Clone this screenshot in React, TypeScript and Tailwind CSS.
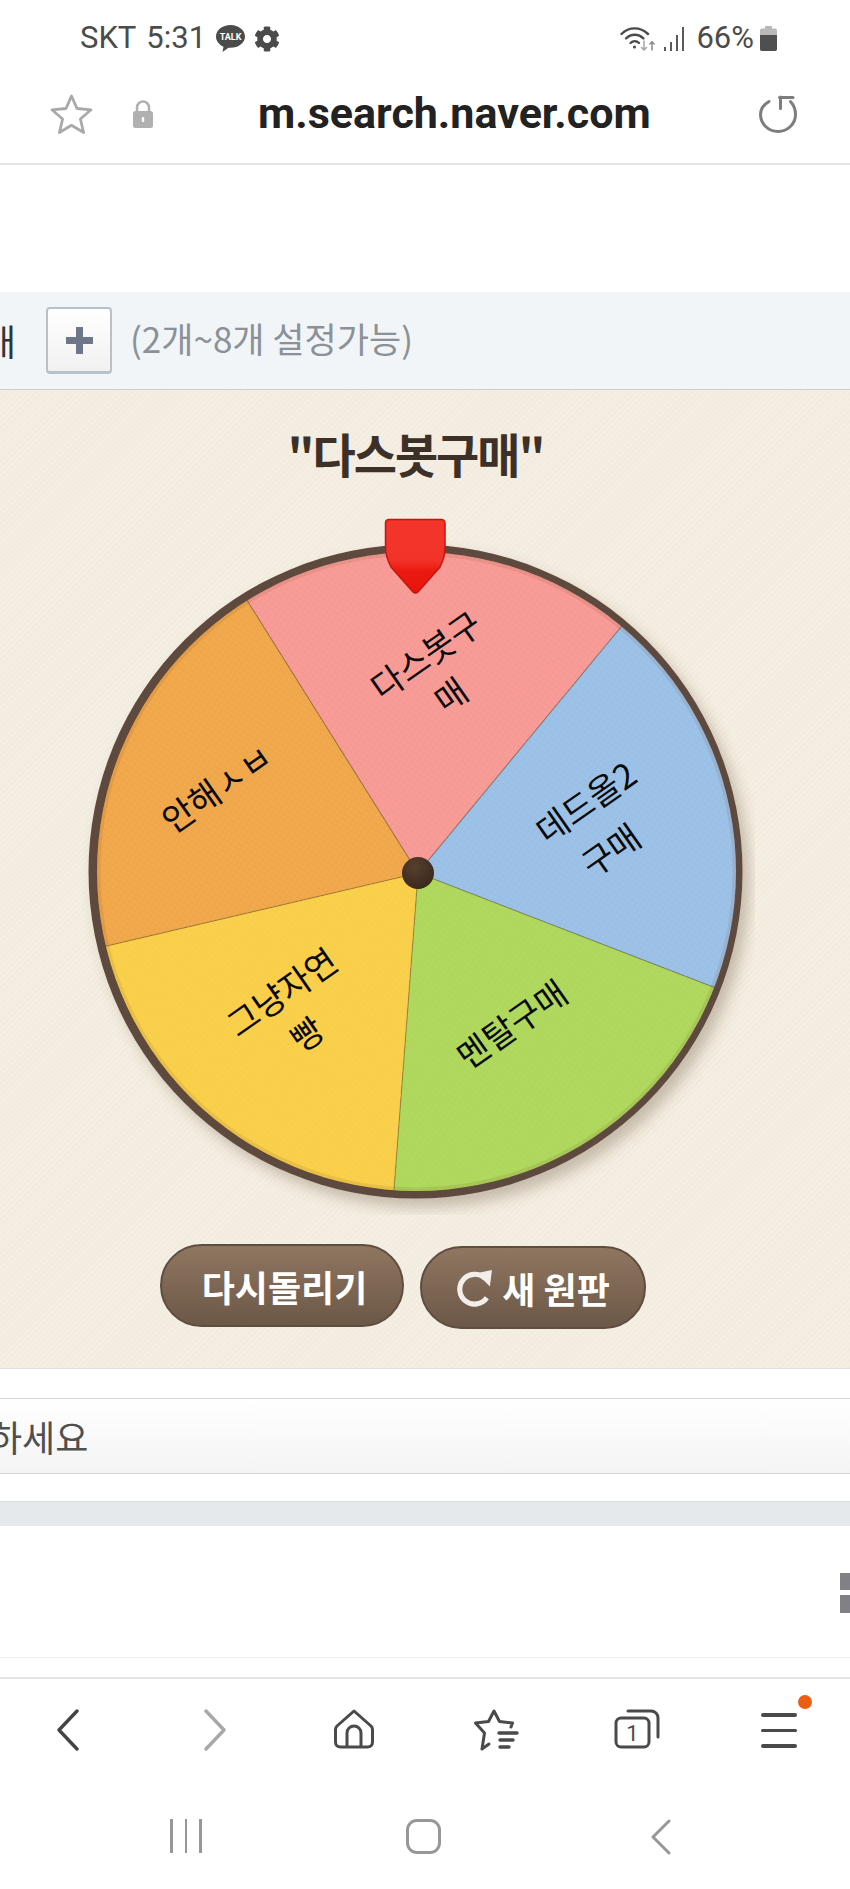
import React from 'react';
import { FaCog } from 'react-icons/fa';

const KR = "font-['Noto_Sans_CJK_KR','Noto_Sans',sans-serif]";

const KakaoIcon = () => (
  <svg width="29" height="27" viewBox="0 0 29 27">
    <path d="M14.5 0C6.5 0 0 5 0 11.5c0 4.5 3.2 8.300 7.500 10.200L6.500 27l6-4.300c.7.100 1.300.100 2 .100 8 0 14.500-5 14.500-11.300S22.500 0 14.500 0z" fill="#4b4b4b" />
    <text x="14.500" y="15" textAnchor="middle" fontSize="9" fontWeight="700" fill="#fff" fontFamily="Roboto, sans-serif">TALK</text>
  </svg>
);

const WifiIcon = () => (
  <svg width="36" height="26" viewBox="0 0 36 26" fill="none" stroke="#4b4b4b" strokeLinecap="round">
    <path d="M1.500 8C9 0.500 20 0.500 28 8" strokeWidth="2.400" />
    <path d="M6 12.500c5-5 12.500-5 17.500 0" strokeWidth="2.400" />
    <path d="M10.500 17c2.500-2.500 6-2.500 8.500 0" strokeWidth="2.400" />
    <circle cx="14.500" cy="21" r="1.600" fill="#4b4b4b" stroke="none" />
    <path d="M24 15v9M21.500 21.500l2.500 2.500 2.500-2.500" stroke="#a5a5a5" strokeWidth="1.500" />
    <path d="M32 24v-8M29.800 18l2.200-2.200 2.200 2.200" stroke="#8a8a8a" strokeWidth="1.500" />
  </svg>
);

const SignalIcon = () => (
  <svg width="21" height="24" viewBox="0 0 21 24" fill="#5a5a5a">
    <rect x="0" y="20" width="2" height="4" />
    <rect x="6" y="15" width="2" height="9" />
    <rect x="12" y="8" width="2" height="16" />
    <rect x="18" y="0" width="2" height="24" />
  </svg>
);

const BatteryIcon = () => (
  <svg width="17" height="25" viewBox="0 0 17 25">
    <path d="M5 0h7v2.500h3a2 2 0 0 1 2 2V23a2 2 0 0 1-2 2H2a2 2 0 0 1-2-2V4.500a2 2 0 0 1 2-2h3z" fill="#b9b9b9" />
    <path d="M0 9h17v14a2 2 0 0 1-2 2H2a2 2 0 0 1-2-2z" fill="#4f4f4f" />
  </svg>
);

const StarOutline = () => (
  <svg width="43" height="40" viewBox="0 0 43 40" fill="none" stroke="#a9a9a9" strokeWidth="2.800" strokeLinejoin="round">
    <path d="M21.500 2l5.500 12.500 14 1.300-10.600 9.200 3.200 13.500-12.100-7.200L9.400 38.500l3.200-13.500L2 15.800l14-1.300z" />
  </svg>
);

const LockIcon = () => (
  <svg width="20" height="28" viewBox="0 0 20 28">
    <path d="M4 12V7.500a6 6 0 0 1 12 0V12" fill="none" stroke="#b0b0b0" strokeWidth="2.500" />
    <rect x="0" y="11" width="20" height="17" rx="2.500" fill="#b0b0b0" />
    <rect x="8.800" y="17" width="2.400" height="5" rx="1" fill="#fff" />
  </svg>
);

const ReloadIcon = () => (
  <svg width="39" height="38" viewBox="0 0 39 38" fill="none" stroke="#7d7d7d" strokeWidth="3" strokeLinecap="round">
    <path d="M10 6.500C4.500 9.800 1.500 14.500 1.500 19.500a17.500 17 0 1 0 35 0c0-5-1.800-9.500-5-13" />
    <path d="M22.500 2.500h13.500M23.500 2v11.500" transform="translate(-2 0)" />
  </svg>
);

const PlusGlyph = () => (
  <svg width="27" height="27" viewBox="0 0 27 27" fill="#6f7689">
    <rect x="10" y="0" width="7" height="27" />
    <rect x="0" y="10" width="27" height="7" />
  </svg>
);

// slice edges run a bit past the rim, the clip circle trims them
const slices = [
  { d: 'M418 873 L239.500 588.500 A335 335 0 0 1 632.200 613.600 Z', fill: '#f79a95' },
  { d: 'M418 873 L632.200 613.600 A335 335 0 0 1 727.800 992.700 Z', fill: '#9bc0e6' },
  { d: 'M418 873 L727.800 992.700 A335 335 0 0 1 392.800 1203.800 Z', fill: '#aed75c' },
  { d: 'M418 873 L392.800 1203.800 A335 335 0 0 1 90.400 949.700 Z', fill: '#f9cf49' },
  { d: 'M418 873 L90.400 949.700 A335 335 0 0 1 239.500 588.500 Z', fill: '#f0a74a' },
];

const labels = [
  { t: '다스봇구', x: 425, y: 654 },
  { t: '매', x: 450, y: 694 },
  { t: '데드올2', x: 585, y: 801 },
  { t: '구매', x: 610, y: 849 },
  { t: '멘탈구매', x: 511, y: 1023 },
  { t: '그냥자연', x: 281, y: 991 },
  { t: '빵', x: 306, y: 1033 },
  { t: '안해ㅅㅂ', x: 216, y: 787 },
];

const Wheel = () => (
  <svg width="675" height="705" viewBox="80 510 675 705" className="ml-[80px] block">
    <defs>
      <pattern id="grain" width="5" height="5" patternUnits="userSpaceOnUse" patternTransform="rotate(35)">
        <circle cx="1.500" cy="1.500" r="1" fill="#ffffff" opacity="0.08" />
      </pattern>
      <clipPath id="face">
        <circle cx="416.500" cy="871.500" r="319.500" />
      </clipPath>
      <filter id="wheelShadow" x="-10%" y="-10%" width="120%" height="120%">
        <feDropShadow dx="7" dy="9" stdDeviation="7" floodColor="#5a4632" floodOpacity="0.3" />
      </filter>
      <linearGradient id="pin" x1="0" y1="0" x2="0" y2="1">
        <stop offset="0" stopColor="#f4352b" />
        <stop offset="0.55" stopColor="#f2332a" />
        <stop offset="0.7" stopColor="#ea1a10" />
        <stop offset="1" stopColor="#e8140c" />
      </linearGradient>
      <radialGradient id="hub" cx="0.4" cy="0.3" r="0.8">
        <stop offset="0" stopColor="#56402f" />
        <stop offset="1" stopColor="#38261a" />
      </radialGradient>
    </defs>
    <circle cx="415.500" cy="871.500" r="327" fill="#5d4a3c" filter="url(#wheelShadow)" />
    <g clipPath="url(#face)">
      {slices.map((s) => (
        <path key={s.fill} d={s.d} fill={s.fill} stroke="#4a3a20" strokeOpacity="0.25" strokeWidth="1.200" />
      ))}
      {slices.map((s) => (
        <path key={s.fill + 'g'} d={s.d} fill="url(#grain)" />
      ))}
      <circle cx="416.500" cy="871.500" r="318" fill="none" stroke="#7a4a20" strokeOpacity="0.12" strokeWidth="4" />
    </g>
    {labels.map((l) => (
      <text
        key={l.t}
        x={l.x}
        y={l.y}
        textAnchor="middle"
        dominantBaseline="central"
        fontSize="34"
        fill="#0a0a0a"
        fontFamily="'Noto Sans CJK KR', sans-serif"
        transform={`rotate(-35 ${l.x} ${l.y})`}
      >
        {l.t}
      </text>
    ))}
    <circle cx="418" cy="873" r="16" fill="url(#hub)" />
    <path
      d="M388.500 519.500h53a3.500 3.500 0 0 1 3.500 3.500V548c0 8-2 13-5 19L418 592a3.500 3.500 0 0 1-5 0L391 567c-3-6-5.500-11-5.500-19V523a3.500 3.500 0 0 1 3-3.500z"
      fill="url(#pin)"
      stroke="#c7150d"
      strokeWidth="1.500"
    />
  </svg>
);

const NavChevron = ({ left, color }: { left?: boolean; color: string }) => (
  <svg width="24" height="42" viewBox="0 0 24 42" fill="none" stroke={color} strokeWidth="3.400" strokeLinecap="round" strokeLinejoin="round">
    <path d={left ? 'M21 2L3 21l18 19' : 'M3 2l18 19L3 40'} />
  </svg>
);

const HomeIcon = () => (
  <svg width="40" height="40" viewBox="0 0 40 40" fill="none" stroke="#4a4a4a" strokeWidth="3" strokeLinejoin="round">
    <path d="M20 2L3 17c-1 1-1.500 2-1.500 3.500V33c0 3 2 5 5 5h27c3 0 5-2 5-5V20.500c0-1.500-.5-2.500-1.500-3.500z" />
    <path d="M13 38V24a7 7 0 0 1 14 0v14" />
  </svg>
);

const BookmarkIcon = () => (
  <svg width="46" height="42" viewBox="0 0 46 42" fill="none" stroke="#4a4a4a" strokeWidth="3" strokeLinecap="round" strokeLinejoin="round">
    <path d="M38 18l1.500-4-13-1.500L21 2l-5.500 10.500-13 1.500 9 10-2.500 16 7-5" />
    <path d="M26 24h18M27 31h13M27 38h9" strokeWidth="3.400" />
  </svg>
);

const TabsIcon = () => (
  <svg width="46" height="40" viewBox="0 0 46 40" fill="none" stroke="#4a4a4a" strokeWidth="3">
    <path d="M14 2h23c4 0 7 3 7 7v19" strokeLinecap="round" />
    <rect x="2" y="9" width="33" height="29" rx="5" />
    <text x="18.500" y="32" textAnchor="middle" fontSize="22" fill="#4a4a4a" stroke="none" fontFamily="Roboto, sans-serif">1</text>
  </svg>
);

const MenuIcon = () => (
  <div className="relative flex w-[36px] flex-col gap-[12px] pt-[1px]">
    <div className="h-[3.5px] rounded-full bg-[#4a4a4a]" />
    <div className="h-[3.5px] rounded-full bg-[#4a4a4a]" />
    <div className="h-[3.5px] rounded-full bg-[#4a4a4a]" />
    <div className="absolute -right-[15px] -top-[17px] h-[14px] w-[14px] rounded-full bg-[#ec5f12]" />
  </div>
);

const App: React.FC = () => {
  return (
    <div className={`h-[1889px] w-[850px] overflow-hidden bg-white ${KR}`}>
      {/* status bar */}
      <div className="flex h-[76px] items-center pl-[80px] pr-[73px] pt-[1px] font-['Roboto',sans-serif] text-[31px] text-[#4b4b4b]">
        <span>SKT</span>
        <span className="ml-[10px]">5:31</span>
        <div className="ml-[10px]"><KakaoIcon /></div>
        <FaCog className="ml-[9px] text-[26px]" />
        <div className="ml-auto"><WifiIcon /></div>
        <div className="ml-[8px]"><SignalIcon /></div>
        <span className="ml-[11px]">66%</span>
        <div className="ml-[6px]"><BatteryIcon /></div>
      </div>

      {/* address bar */}
      <div className="flex h-[89px] items-center border-b-2 border-[#e4e4e4] pb-[12px] pl-[50px]">
        <StarOutline />
        <div className="ml-[40px]"><LockIcon /></div>
        <span className="ml-[105px] w-[392px] whitespace-nowrap font-['Roboto',sans-serif] text-[43px] font-bold text-[#222222]">
          m.search.naver.com
        </span>
        <div className="ml-[109px]"><ReloadIcon /></div>
      </div>

      <div className="h-[127px]" />

      {/* count row */}
      <div className="flex h-[98px] items-center border-b border-[#cfcfca] bg-[#f1f5f7]">
        <span className="-ml-[17px] mb-[2px] w-[36px] text-[36px] text-[#333333]">개</span>
        <button className="ml-[27px] flex h-[67px] w-[66px] items-center justify-center rounded-[4px] border-2 border-b-[3px] border-[#b9c0c8] bg-gradient-to-b from-white to-[#f1f1f1]">
          <PlusGlyph />
        </button>
        <span className="mb-[4px] ml-[18px] whitespace-nowrap text-[35px] text-[#8b9198]">(2개~8개 설정가능)</span>
      </div>

      {/* roulette */}
      <div className="h-[979px] border-b border-[#e2e0da] bg-[repeating-linear-gradient(135deg,#f5eee2_0px,#f5eee2_2px,#f2ebdf_2px,#f2ebdf_4px)]">
        <div className="flex h-[120px] justify-center pt-[29px] pr-[19px]">
          <h2 className="whitespace-nowrap text-[47px] leading-[68px] font-bold tracking-[-2px] text-[#3d3028]">"다스봇구매"</h2>
        </div>
        <Wheel />
        <div className="mt-[29px] flex items-start pl-[160px]">
          <button className="flex h-[83px] w-[244px] items-center justify-center rounded-full border-2 border-[#5f4e40] bg-gradient-to-b from-[#8f7660] to-[#6c5848] pl-[5px] text-[36px] font-bold text-white">
            다시돌리기
          </button>
          <button className="ml-[16px] mt-[2px] flex h-[83px] w-[226px] items-center justify-center gap-[9px] rounded-full border-2 border-[#5f4e40] bg-gradient-to-b from-[#8f7660] to-[#6c5848] text-[36px] font-bold text-white">
            <svg width="37" height="39" viewBox="0 0 36 38" fill="none" stroke="#f2eeea" strokeWidth="5">
              <path d="M30 29a14.500 14.500 0 1 1-2-19" />
              <path d="M20 5l15-3-2 16z" fill="#f2eeea" stroke="none" />
            </svg>
            <span>새 원판</span>
          </button>
        </div>
      </div>

      <div className="h-[29px]" />

      {/* notice row */}
      <div className="flex h-[76px] items-center border-y border-[#d3d5d8] bg-gradient-to-b from-white to-[#f4f4f5]">
        <span className="-ml-[11px] whitespace-nowrap text-[36px] text-[#4f4f4f]">하세요</span>
      </div>

      <div className="h-[27px]" />
      <div className="h-[25px] border-t border-[#dde0e3] bg-[#e6e9ec]" />

      {/* blank card with the clipped grid icon */}
      <div className="flex h-[132px] flex-col items-end gap-[5px] border-b border-[#eeeeee] pt-[47px]">
        <div className="h-[17px] w-[10px] bg-[#808086]" />
        <div className="h-[18px] w-[10px] bg-[#808086]" />
      </div>

      <div className="h-[19px]" />

      {/* browser toolbar */}
      <div className="grid h-[123px] grid-cols-6 border-t-2 border-[#e4e4e4] pt-[30px]">
        <div className="flex justify-center pr-[5px]"><NavChevron left color="#444444" /></div>
        <div className="flex justify-center pl-[5px]"><NavChevron color="#a8a8a8" /></div>
        <div className="flex justify-center"><HomeIcon /></div>
        <div className="flex justify-center"><BookmarkIcon /></div>
        <div className="flex justify-center"><TabsIcon /></div>
        <div className="flex justify-center pt-[3px]"><MenuIcon /></div>
      </div>

      {/* android nav */}
      <div className="flex items-start pt-[19px] pl-[170px]">
        <div className="flex h-[34px] gap-[12px]">
          <div className="w-[2.5px] bg-[#979797]" />
          <div className="w-[2.5px] bg-[#979797]" />
          <div className="w-[2.5px] bg-[#979797]" />
        </div>
        <div className="ml-[204px] h-[35px] w-[35px] rounded-[11px] border-[3px] border-[#979797]" />
        <div className="ml-[210px]">
          <svg width="20" height="36" viewBox="0 0 20 36" fill="none" stroke="#979797" strokeWidth="3" strokeLinecap="round" strokeLinejoin="round">
            <path d="M18 2L2 18l16 16" />
          </svg>
        </div>
      </div>
    </div>
  );
};

export default App;
